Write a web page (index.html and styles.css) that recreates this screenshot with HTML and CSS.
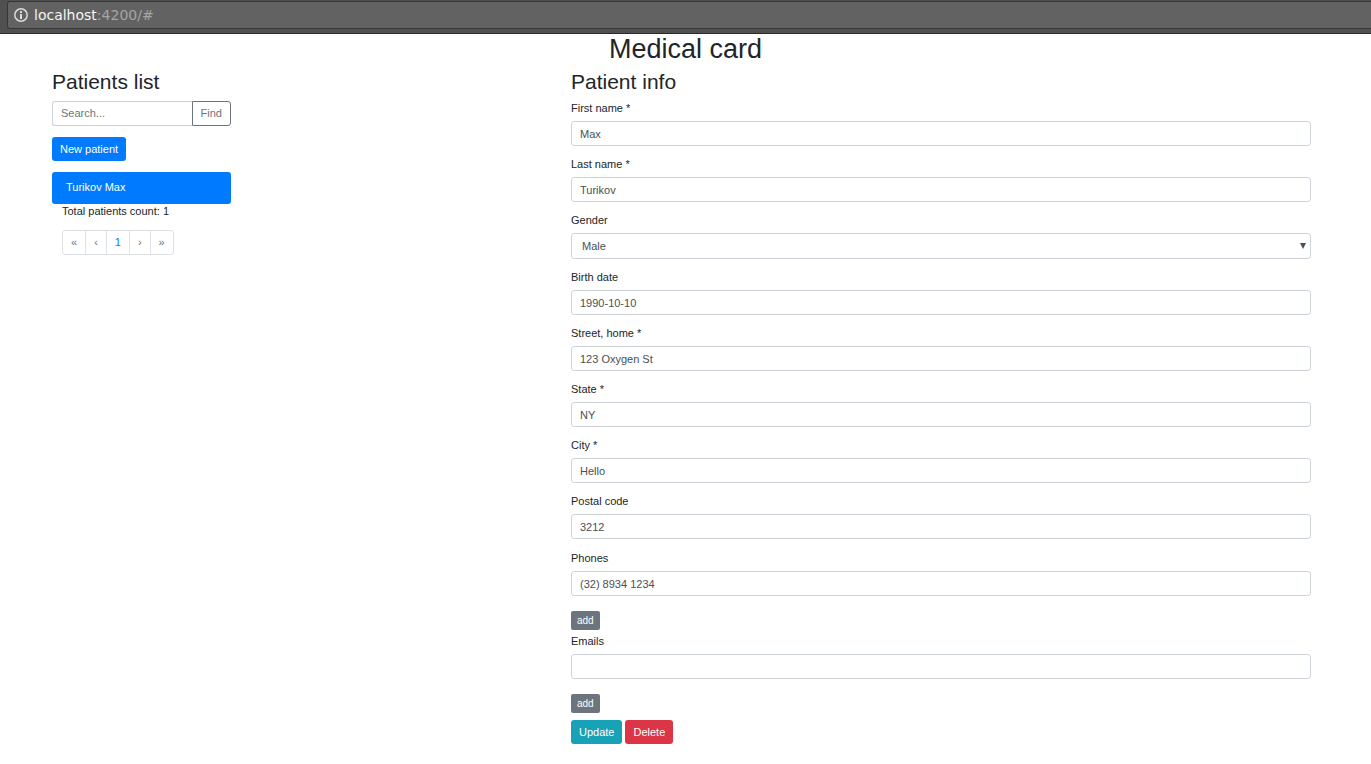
FILE: index.html
```html
<!DOCTYPE html>
<html lang="en">
<head>
<meta charset="utf-8">
<meta name="viewport" content="width=device-width, initial-scale=1">
<title>Medical card</title>
<link rel="stylesheet" href="styles.css">
</head>
<body>
<div class="browser-bar">
  <div class="address">
    <svg class="address-icon" viewBox="0 0 14 14" aria-hidden="true">
      <circle cx="7" cy="7" r="6.2" fill="none" stroke="currentColor" stroke-width="1.5"/>
      <path d="M6 3h2v2H6zM6 6h2v5H6z" fill="currentColor"/>
    </svg>
    <span class="address-text"><span class="address-host">localhost</span>:4200/#</span>
  </div>
</div>
<h1 class="page-title">Medical card</h1>
<main class="layout">
  <section class="patients">
    <h2 class="section-title">Patients list</h2>
    <form class="search">
      <input class="control search-input" type="text" placeholder="Search..." aria-label="Search patients">
      <button class="btn btn-outline" type="button">Find</button>
    </form>
    <button class="btn btn-primary" type="button">New patient</button>
    <a class="patient-item" href="#">Turikov Max</a>
    <div class="patients-footer">
      <p class="count">Total patients count: 1</p>
      <nav class="pagination" aria-label="Pages">
        <a class="page-link muted" href="#">«</a>
        <a class="page-link muted" href="#">‹</a>
        <a class="page-link" href="#">1</a>
        <a class="page-link muted" href="#">›</a>
        <a class="page-link muted" href="#">»</a>
      </nav>
    </div>
  </section>
  <section class="info">
    <h2 class="section-title">Patient info</h2>
    <form>
      <div class="field"><label for="first">First name *</label><input class="control" id="first" type="text" value="Max"></div>
      <div class="field"><label for="last">Last name *</label><input class="control" id="last" type="text" value="Turikov"></div>
      <div class="field">
        <label for="gender">Gender</label>
        <div class="select-wrap">
          <select class="control select" id="gender"><option>Male</option><option>Female</option></select>
          <svg class="select-arrow" viewBox="0 0 6 6" aria-hidden="true"><path d="M0 0h6L3 6z" fill="currentColor"/></svg>
        </div>
      </div>
      <div class="field"><label for="birth">Birth date</label><input class="control" id="birth" type="text" value="1990-10-10"></div>
      <div class="field"><label for="street">Street, home *</label><input class="control" id="street" type="text" value="123 Oxygen St"></div>
      <div class="field"><label for="state">State *</label><input class="control" id="state" type="text" value="NY"></div>
      <div class="field"><label for="city">City *</label><input class="control" id="city" type="text" value="Hello"></div>
      <div class="field"><label for="postal">Postal code</label><input class="control" id="postal" type="text" value="3212"></div>
      <div class="contacts">
        <div class="multi-field">
          <label for="phone">Phones</label><input class="control" id="phone" type="text" value="(32) 8934 1234">
          <button class="btn-add" type="button">add</button>
        </div>
        <div class="multi-field">
          <label for="email">Emails</label><input class="control" id="email" type="text">
          <button class="btn-add" type="button">add</button>
        </div>
      </div>
      <div class="actions">
        <button class="btn btn-info" type="button">Update</button>
        <button class="btn btn-danger" type="button">Delete</button>
      </div>
    </form>
  </section>
</main>
</body>
</html>
```
FILE: styles.css
```css
* { box-sizing: border-box; }
body {
  margin: 0;
  background: #fff;
  color: #212529;
  font: 11px/16px "Liberation Sans", Arial, sans-serif;
}
h1, h2, p { margin: 0; font-weight: 400; }
input, select, button { margin: 0; font: inherit; }

.browser-bar {
  padding: 1px 0 4px 7px;
  background: #505050;
  border-bottom: 1px solid #2b272b;
}
.address {
  display: flex;
  align-items: center;
  gap: 6px;
  height: 28px;
  padding: 0 6px;
  background: #626262;
  border: 1px solid #373737;
  border-right: 0;
  border-radius: 3px 0 0 3px;
  color: #a5a5a5;
  font: 14px/20px "DejaVu Sans", sans-serif;
}
.address-icon { width: 14px; height: 14px; color: #dcdcdc; }
.address-host { color: #f5f5f5; }

.page-title { font-size: 27px; line-height: 30px; text-align: center; }
.layout {
  display: grid;
  grid-template-columns: 179fr 340fr 740fr;
  padding: 5px 60px 20px 52px;
}
.info { grid-column: 3; }
.section-title { margin-bottom: 5px; font-size: 21px; line-height: 26px; }

.control {
  display: block;
  width: 100%;
  height: 25px;
  padding: 0 8px;
  background: #fff;
  border: 1px solid #ced4da;
  border-radius: 3px;
  color: #495057;
}
.control::placeholder { color: #6c757d; opacity: 1; }
.search { display: flex; margin: 6px 0 11px; }
.search-input { flex: 1; min-width: 0; padding-bottom: 1px; border-radius: 3px 0 0 3px; border-right: 0; }

.btn {
  height: 24px;
  padding: 0 7px 1px;
  border: 1px solid transparent;
  border-radius: 3px;
  color: #fff;
  line-height: 16px;
}
.btn-outline {
  height: 25px;
  padding: 0 8px 1px;
  background: #fff;
  border-color: #6c757d;
  border-radius: 0 3px 3px 0;
  color: #6c757d;
}
.btn-primary { display: block; background: #007bff; }
.btn-info { background: #17a2b8; }
.btn-danger { background: #dc3545; }

.patient-item {
  display: block;
  margin-top: 11px;
  padding: 7px 14px 9px;
  background: #007bff;
  border-radius: 3px;
  color: #fff;
  text-decoration: none;
}
.patients-footer { padding-left: 10px; }
.count { line-height: 14px; }
.pagination { display: flex; margin-top: 12px; }
.page-link {
  margin-left: -1px;
  padding: 3px 8px 4px;
  border: 1px solid #dee2e6;
  color: #007bff;
  text-decoration: none;
}
.page-link:first-child { margin-left: 0; border-radius: 3px 0 0 3px; }
.page-link:last-child { border-radius: 0 3px 3px 0; }
.muted { color: #6c757d; }

label { display: block; margin-bottom: 5px; }
.field { margin-bottom: 10px; }
.select-wrap { position: relative; }
.select { height: 26px; padding: 0 10px; appearance: none; }
.select-arrow {
  position: absolute;
  top: 10px;
  right: 5px;
  width: 6px;
  height: 6px;
  color: #495057;
  pointer-events: none;
}
.contacts { margin-top: 11px; }
.multi-field { margin-bottom: 3px; }
.btn-add {
  display: block;
  height: 19px;
  margin-top: 15px;
  padding: 0 6px;
  background: #6c757d;
  border: 0;
  border-radius: 2px;
  color: #fff;
  font-size: 10px;
}
.actions { display: flex; gap: 3px; margin-top: 7px; }
```
